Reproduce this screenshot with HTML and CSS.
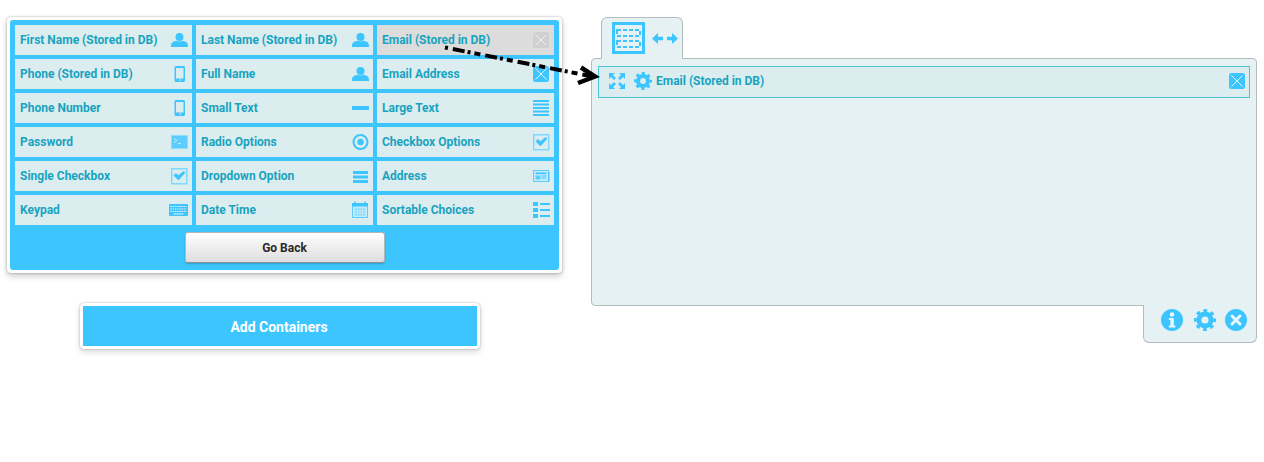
FILE: index.html
```html
<!DOCTYPE html>
<html lang="en">
<head>
<meta charset="utf-8">
<title>Form builder</title>
<link rel="stylesheet" href="styles.css">
</head>
<body>
<svg class="defs" width="0" height="0" aria-hidden="true">
  <symbol id="i-person" viewBox="0 0 20 20"><circle cx="11.500" cy="7" r="4"/><path d="M3 17v-1.500C3 12.500 6 11 8.500 10.800c1.500 1 4.500 1 6 0C17 11 20 12.500 20 15.500V17z"/></symbol>
  <symbol id="i-phone" viewBox="0 0 20 20"><path fill-rule="evenodd" d="M8 2h7.500A1.500 1.500 0 0 1 17 3.500v13a1.500 1.500 0 0 1-1.500 1.500H8a1.500 1.500 0 0 1-1.500-1.500v-13A1.500 1.500 0 0 1 8 2zm0 2v10.500h7.500V4zm3.700 11.300v1.400h1.300v-1.400z"/></symbol>
  <symbol id="i-cross" viewBox="0 0 20 20"><rect x="3" y="2" width="16" height="16" rx="2.500"/><path d="M5.500 4.500l11 11M16.500 4.500l-11 11" stroke="#e3f4fa" stroke-width="1" fill="none"/></symbol>
  <symbol id="i-dash" viewBox="0 0 20 20"><rect x="3" y="8" width="17" height="4"/></symbol>
  <symbol id="i-lines" viewBox="0 0 20 20"><path d="M3 2h16v2H3zM3 5.500h16v2H3zM3 9h16v2H3zM3 12.500h16v2H3zM3 16h16v2H3z"/></symbol>
  <symbol id="i-radio" viewBox="0 0 20 20"><circle cx="11.500" cy="10" r="7" fill="none" stroke="#3dc5ff" stroke-width="2"/><circle cx="11.500" cy="10" r="3.200"/></symbol>
  <symbol id="i-check" viewBox="0 0 20 20"><rect x="3.750" y="2.750" width="15" height="15" fill="none" stroke="#7fd8ff" stroke-width="1.500"/><path d="M6 9.500l4.500 4.500 6.500-7.500-1.500-1-5 4-2.800-2z" stroke="#3dc5ff" stroke-width=".8"/></symbol>
  <symbol id="i-term" viewBox="0 0 20 20"><rect x="3.500" y="3.500" width="16" height="13" fill="#5ccdff" stroke="#8fdcff"/><path d="M6 6.500l3 2-3 2M10 11.500h3" stroke="#e3f4fa" fill="none" stroke-width=".8"/></symbol>
  <symbol id="i-keys" viewBox="0 0 20 20"><rect x="1" y="4" width="19" height="12" rx="1"/><path d="M2.500 6.500h16M2.500 9h16M2.500 11.500h16" stroke="#e3f4fa" stroke-width="1" stroke-dasharray="1.500 .7" fill="none"/><path d="M5.500 14h10" stroke="#e3f4fa" stroke-width="1"/></symbol>
  <symbol id="i-date" viewBox="0 0 20 20"><rect x="3.500" y="3.500" width="15" height="14" fill="#bdeafc" stroke="#5ccdff"/><rect x="3" y="3" width="16" height="3.500"/><path d="M6 1.800v2.500M16 1.800v2.500" stroke="#3dc5ff" stroke-width="1.500"/><path d="M6 8.500h10v7H6z" fill="#7fd8ff"/><path d="M6 10.800h10M6 13.200h10M8.500 8.500v7M11 8.500v7M13.500 8.500v7" stroke="#dcedf1" stroke-width=".7"/></symbol>
  <symbol id="i-card" viewBox="0 0 20 20"><rect x="3.500" y="4.500" width="15" height="11" fill="#c5ecfc" stroke="#5ccdff"/><path d="M18.500 6h1v9.500h-1z"/><path d="M5.500 6.500h11v1.700h-11z"/><path d="M5.500 9.500h5v4h-5z" fill="#5ccdff"/><path d="M11.500 9.500h5v1h-5zM11.500 11.500h5v1h-5z" fill="#3dc5ff"/></symbol>
  <symbol id="i-list" viewBox="0 0 20 20"><path d="M3 2h5v4H3zM3 8h5v4H3zM3 14h5v4H3zM10 3h10v2H10zM10 9h10v2H10zM10 15h10v2H10z"/></symbol>
  <symbol id="i-bars" viewBox="0 0 20 20"><path d="M4 5h15v3H4zM4 9.500h15v3H4zM4 14h15v3H4z"/></symbol>
  <symbol id="i-gear" viewBox="0 0 20 20"><circle cx="10" cy="10" r="5.500" fill="none" stroke="#3dc5ff" stroke-width="4.500"/><circle cx="10" cy="10" r="8.300" fill="none" stroke="#3dc5ff" stroke-width="3.400" stroke-dasharray="3.300 3.220" stroke-dashoffset="1.650"/></symbol>
  <symbol id="i-expand" viewBox="0 0 18 18"><path d="M1 1h6L5 3l3 3-2 2-3-3-2 2zM17 1v6l-2-2-3 3-2-2 3-3-2-2zM1 17v-6l2 2 3-3 2 2-3 3 2 2zM17 17h-6l2-2-3-3 2-2 3 3 2-2z"/></symbol>
</svg>

<main class="page">
  <div class="left">
    <section class="card">
      <div class="panel">
        <ul class="grid">
          <li class="cell"><span>First Name (Stored in DB)</span><svg class="ico"><use href="#i-person"/></svg></li>
          <li class="cell"><span>Last Name (Stored in DB)</span><svg class="ico"><use href="#i-person"/></svg></li>
          <li class="cell cell-used"><span>Email (Stored in DB)</span><svg class="ico ico-used"><use href="#i-cross"/></svg></li>
          <li class="cell"><span>Phone (Stored in DB)</span><svg class="ico"><use href="#i-phone"/></svg></li>
          <li class="cell"><span>Full Name</span><svg class="ico"><use href="#i-person"/></svg></li>
          <li class="cell"><span>Email Address</span><svg class="ico"><use href="#i-cross"/></svg></li>
          <li class="cell"><span>Phone Number</span><svg class="ico"><use href="#i-phone"/></svg></li>
          <li class="cell"><span>Small Text</span><svg class="ico"><use href="#i-dash"/></svg></li>
          <li class="cell"><span>Large Text</span><svg class="ico"><use href="#i-lines"/></svg></li>
          <li class="cell"><span>Password</span><svg class="ico"><use href="#i-term"/></svg></li>
          <li class="cell"><span>Radio Options</span><svg class="ico"><use href="#i-radio"/></svg></li>
          <li class="cell"><span>Checkbox Options</span><svg class="ico"><use href="#i-check"/></svg></li>
          <li class="cell"><span>Single Checkbox</span><svg class="ico"><use href="#i-check"/></svg></li>
          <li class="cell"><span>Dropdown Option</span><svg class="ico"><use href="#i-bars"/></svg></li>
          <li class="cell"><span>Address</span><svg class="ico"><use href="#i-card"/></svg></li>
          <li class="cell"><span>Keypad</span><svg class="ico"><use href="#i-keys"/></svg></li>
          <li class="cell"><span>Date Time</span><svg class="ico"><use href="#i-date"/></svg></li>
          <li class="cell"><span>Sortable Choices</span><svg class="ico"><use href="#i-list"/></svg></li>
        </ul>
        <button class="back" type="button">Go Back</button>
      </div>
    </section>
    <div class="add-wrap"><button class="add" type="button">Add Containers</button></div>
  </div>

  <div class="right">
    <div class="tab">
      <svg class="layout-ico" width="33" height="32" viewBox="0 0 33 32"><rect x="1.500" y="1.500" width="30" height="29" fill="none" stroke="#3dc5ff" stroke-width="3"/><g fill="none" stroke="#3dc5ff" stroke-width="2" stroke-dasharray="4 2"><rect x="5" y="8" width="23" height="6"/><rect x="5" y="19" width="23" height="6"/></g></svg>
      <svg class="arrows-ico" width="26" height="11" viewBox="0 0 26 11"><path d="M0 5.500L6 0v3.800h5v3.400H6V11zM26 5.500L20 0v3.800h-5v3.400h5V11z" fill="#3dc5ff"/></svg>
    </div>
    <section class="container">
      <div class="row">
        <svg class="row-ico"><use href="#i-expand"/></svg>
        <svg class="row-ico"><use href="#i-gear"/></svg>
        <span class="row-label">Email (Stored in DB)</span>
        <svg class="row-del"><use href="#i-cross"/></svg>
      </div>
    </section>
    <div class="tools">
      <svg class="tool" viewBox="0 0 22 22"><circle cx="11" cy="11" r="11" fill="#3dc5ff"/><circle cx="11" cy="5.500" r="2.200" fill="#eaf6fb"/><path d="M7.800 9h5v7.500h1.600v2H7.800v-2h1.600V11H7.800z" fill="#eaf6fb"/></svg>
      <svg class="tool tool-gear" viewBox="0 0 20 20"><use href="#i-gear"/></svg>
      <svg class="tool" viewBox="0 0 22 22"><circle cx="11" cy="11" r="11" fill="#3dc5ff"/><path d="M7 7l8 8M15 7l-8 8" stroke="#eaf6fb" stroke-width="3" stroke-linecap="round"/></svg>
    </div>
  </div>
</main>

<svg class="drag-arrow" width="170" height="50" viewBox="0 0 170 50"><path d="M5 7.500L150 36" stroke="#000" stroke-width="4" stroke-dasharray="3 5 12 3 3 4 3 0" fill="none"/><path d="M141 27.500L155 36.500 138 43" stroke="#000" stroke-width="4.500" fill="none"/></svg>
</body>
</html>
```

FILE: styles.css
```css
* { box-sizing: border-box; }
html, body { margin: 0; padding: 0; background: #fff; }
body { position: relative; height: 462px; overflow: hidden; font-family: Roboto, "Liberation Sans", sans-serif; }
.defs { position: absolute; }
.page { display: flex; gap: 29px; padding: 17px 7px 0; }
.left { width: 555px; flex: none; }
.card { padding: 3px; height: 256px; background: #fff; border-radius: 4px; box-shadow: 0 0 2px rgba(0,0,0,.35), 0 3px 6px rgba(0,0,0,.22); }
.panel { height: 250px; padding: 5px 5px 0; background: #3dc5ff; border-radius: 3px; display: flex; flex-direction: column; align-items: center; }
.grid { list-style: none; margin: 0; padding: 0; width: 100%; display: grid; grid-template-columns: repeat(3, 177px); grid-auto-rows: 30px; gap: 4px; }
.cell { display: flex; align-items: center; justify-content: space-between; padding: 0 1px 0 5px; background: #dcedf0; color: #18a3bf; font-size: 12px; font-weight: 700; white-space: nowrap; }
.cell-used { background: #dcdcdc; }
.ico { width: 20px; height: 20px; margin-right: 3px; fill: #3dc5ff; flex: none; }
.ico-used { fill: #d0d0d0; }
.back { margin-top: 7px; width: 200px; height: 31px; border: 1px solid #b0b8bc; border-bottom-color: #8a8f92; border-radius: 3px; background: linear-gradient(#ffffff, #dedede); color: #2a2a2a; font: 700 12px Roboto, "Liberation Sans", sans-serif; box-shadow: 0 1px 2px rgba(0,0,0,.2); }
.add-wrap { margin: 30px 0 0 73px; width: 400px; height: 46px; padding: 3px; background: #fff; border-radius: 4px; box-shadow: 0 0 2px rgba(0,0,0,.35), 0 3px 6px rgba(0,0,0,.15); }
.add { width: 100%; height: 100%; padding: 2px 8px 0 6px; border: 0; background: #3dc5ff; color: #fff; font: 700 14px Roboto, "Liberation Sans", sans-serif; }
.right { width: 666px; flex: none; display: flex; flex-direction: column; }
.tab { position: relative; z-index: 1; margin: 0 0 -1px 10px; width: 82px; height: 42px; padding: 4px 0 0 10px; display: flex; align-items: flex-start; background: #e6f1f3; border: 1px solid #b4bcbe; border-bottom: 0; border-radius: 6px 6px 0 0; }
.layout-ico { flex: none; }
.arrows-ico { margin: 11px 0 0 7px; flex: none; }
.container { height: 248px; padding: 7px 6px 0; background: #e6f1f3; border: 1px solid #b4bcbe; border-radius: 4px 4px 0 4px; }
.row { height: 32px; display: flex; align-items: center; padding: 0 0 2px 9px; background: #dcedf0; border: 1px solid #4cc3d4; }
.row-ico { width: 18px; height: 18px; fill: #3dc5ff; margin-right: 8px; flex: none; }
.row-ico + .row-ico { margin-right: 4px; }
.row-label { color: #18a3bf; font-size: 12px; font-weight: 700; }
.row-del { margin-left: auto; margin-right: 3px; width: 20px; height: 20px; fill: #3dc5ff; flex: none; }
.tools { position: relative; align-self: flex-end; margin-top: -1px; width: 114px; height: 38px; padding: 4px 9px 0 17px; display: flex; justify-content: space-between; background: #e6f1f3; border: 1px solid #b4bcbe; border-top: 0; border-radius: 0 0 6px 6px; }
.tool { width: 22px; height: 22px; flex: none; }
.tool-gear { margin: 0 -1px 0 1px; }
.drag-arrow { position: absolute; left: 440px; top: 40px; }
```
